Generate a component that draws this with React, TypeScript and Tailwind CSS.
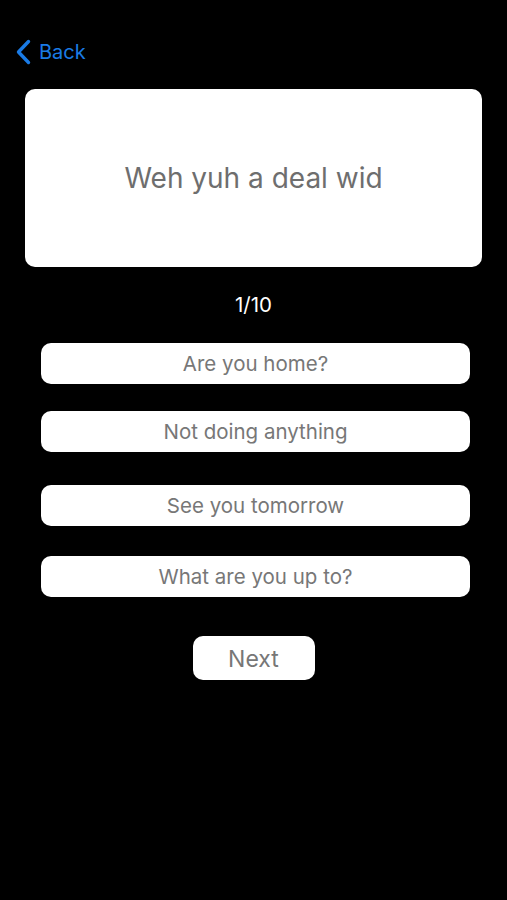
import { useState } from 'react';

const options = [
  { text: 'Are you home?', gap: 'mt-[25px]' },
  { text: 'Not doing anything', gap: 'mt-[27px]' },
  { text: 'See you tomorrow', gap: 'mt-[33px]' },
  { text: 'What are you up to?', gap: 'mt-[30px]' },
];

export default function App() {
  const [selected, setSelected] = useState<number | null>(null);

  return (
    <div
      className="min-h-[900px] w-full bg-black"
      style={{ fontFamily: 'Inter, "Noto Sans", sans-serif' }}
    >
      {/* Nav bar */}
      <div className="flex items-center pl-[15px] pt-[39px]">
        <button className="flex items-center gap-[7px] text-[#1a7be6]">
          <svg width="17" height="26" viewBox="0 0 17 26" fill="none">
            <path
              d="M13.5 2.5 L3.5 13 L13.5 23.5"
              stroke="currentColor"
              strokeWidth="3.4"
              strokeLinecap="round"
              strokeLinejoin="round"
            />
          </svg>
          <span className="text-[20px] leading-[26px]">Back</span>
        </button>
      </div>

      {/* Prompt card */}
      <div className="mx-[25px] mt-[24px] flex h-[178px] items-center justify-center rounded-[10px] bg-white">
        <span className="text-[28px] text-[#6e6e6e]">Weh yuh a deal wid</span>
      </div>

      {/* Progress */}
      <div className="mt-[25px] text-center text-[20.5px] leading-[26px] text-white">1/10</div>

      {/* Answers */}
      <div className="ml-[41px] mr-[37px] flex flex-col">
        {options.map((o, i) => (
          <button
            key={o.text}
            onClick={() => setSelected(i)}
            className={`${o.gap} flex h-[41px] items-center justify-center rounded-[10px] bg-white pt-[2px] text-[20.5px] text-[#777777]`}
          >
            {o.text}
          </button>
        ))}
      </div>

      {/* Next */}
      <div className="mt-[39px] flex justify-center">
        <button className="flex h-[44px] w-[122px] items-center justify-center rounded-[10px] bg-white pt-[2px] text-[23px] text-[#777777]">
          Next
        </button>
      </div>
      {selected !== null && <span className="hidden">{selected}</span>}
    </div>
  );
}
